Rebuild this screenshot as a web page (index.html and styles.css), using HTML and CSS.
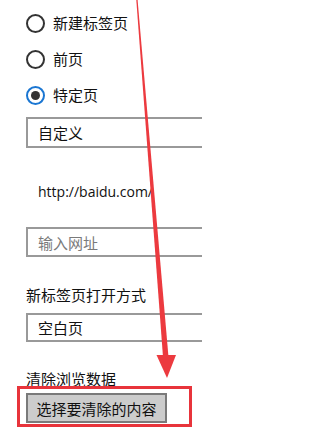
FILE: index.html
```html
<!DOCTYPE html>
<html lang="zh-CN">
<head>
<meta charset="utf-8">
<link rel="stylesheet" href="styles.css">
</head>
<body>
<div class="page">
  <div class="radio-row"><span class="radio"></span><span class="text">新建标签页</span></div>
  <div class="radio-row"><span class="radio"></span><span class="text">前页</span></div>
  <div class="radio-row"><span class="radio checked"></span><span class="text">特定页</span></div>
  <div class="field select-1">自定义</div>
  <div class="url">http://baidu.com/</div>
  <div class="field input">输入网址</div>
  <div class="label label-1">新标签页打开方式</div>
  <div class="field select-2">空白页</div>
  <div class="label label-2">清除浏览数据</div>
  <div class="btn">选择要清除的内容</div>
</div>
<svg class="annot" width="202" height="437" viewBox="0 0 202 437">
  <polygon points="136.3,0 137.6,0 168.5,357 163,357" fill="#ec3a3f"/>
  <polygon points="156.5,355 176,355 167,378" fill="#ec3a3f"/>
  <rect x="18.5" y="387.5" width="172" height="38" fill="none" stroke="#e8343b" stroke-width="3"/>
</svg>
</body>
</html>
```
FILE: styles.css
```css
html, body {
  margin: 0;
  padding: 0;
  background: #ffffff;
  overflow: hidden;
}
body {
  width: 202px;
  height: 437px;
  position: relative;
  font-family: "Noto Sans CJK SC", "Noto Sans", sans-serif;
  font-size: 15px;
  color: #111111;
}
.page {
  display: flex;
  flex-direction: column;
  padding: 5px 0 0 26px;
}
.radio-row {
  height: 36px;
  display: flex;
  align-items: center;
  gap: 8px;
}
.radio {
  width: 19px;
  height: 19px;
  box-sizing: border-box;
  border: 2px solid #333333;
  border-radius: 50%;
  display: flex;
  align-items: center;
  justify-content: center;
  flex: none;
}
.radio.checked {
  border-color: #1a76d2;
}
.radio.checked::after {
  content: "";
  width: 9px;
  height: 9px;
  border-radius: 50%;
  background: #333333;
}
.text {
  line-height: 20px;
}
.field {
  width: 210px;
  box-sizing: border-box;
  border: 2px solid #999999;
  padding-left: 10px;
  display: flex;
  align-items: center;
  flex: none;
}
.select-1 {
  margin-top: 4px;
  height: 31px;
}
.url {
  margin-top: 34px;
  height: 20px;
  line-height: 20px;
  padding-left: 12px;
  font-family: "Open Sans", "Noto Sans", sans-serif;
  font-size: 14px;
}
.input {
  margin-top: 25px;
  height: 30px;
  color: #7a7a7a;
}
.label {
  height: 20px;
  line-height: 20px;
}
.label-1 {
  margin-top: 28px;
}
.select-2 {
  margin-top: 8px;
  height: 29px;
}
.label-2 {
  margin-top: 27px;
}
.btn {
  margin-top: 4px;
  width: 141px;
  height: 30px;
  box-sizing: border-box;
  border: 2px solid #7a7a7a;
  background: #cccccc;
  display: flex;
  align-items: center;
  justify-content: center;
}
.annot {
  position: absolute;
  left: 0;
  top: 0;
  pointer-events: none;
}
```
